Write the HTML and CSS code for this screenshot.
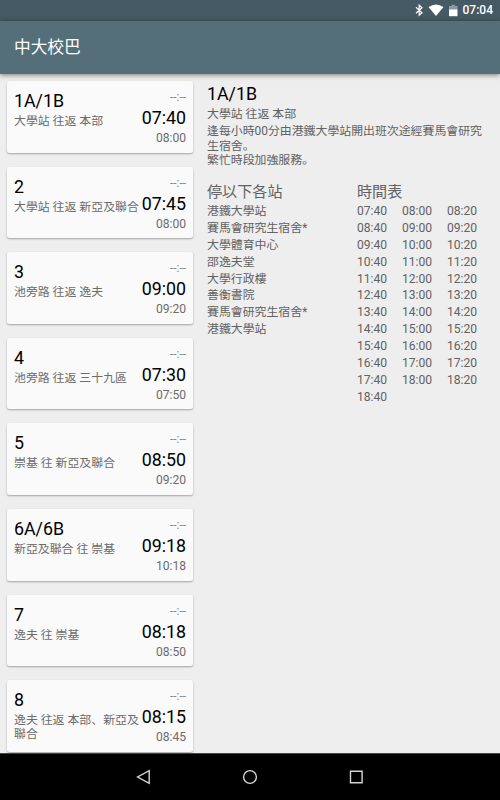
FILE: index.html
```
<!DOCTYPE html>
<html lang="ja">
<head>
<meta charset="utf-8">
<title>中大校巴</title>
<link rel="stylesheet" href="styles.css">
</head>
<body>
<div class="status">
<svg class="status-icons" width="46" height="16" viewBox="0 0 46 16">
<path d="M2 5.2 8 10.7 5.2 13.2V3.2L8 5.7 2 11.2" fill="none" stroke="#fff" stroke-width="1.2"/>
<path d="M14.5 5Q22-.2 29.5 5L22 14Z" fill="#fff"/>
<path d="M35 4h2.500V2.800h3.500V4h2.500v4h-8.500z" fill="#8d999f"/>
<path d="M35 7.500h8.500V14.200h-8.500z" fill="#fff"/>
</svg>
<span>07:04</span>
</div>
<header class="toolbar">中大校巴</header>
<main class="content">
<div class="routes">
<div class="card"><div class="info"><div class="name">1A/1B</div><div class="desc">大學站 往返 本部</div></div><div class="times"><div class="prev">--:--</div><div class="next">07:40</div><div class="later">08:00</div></div></div>
<div class="card"><div class="info"><div class="name">2</div><div class="desc">大學站 往返 新亞及聯合</div></div><div class="times"><div class="prev">--:--</div><div class="next">07:45</div><div class="later">08:00</div></div></div>
<div class="card"><div class="info"><div class="name">3</div><div class="desc">池旁路 往返 逸夫</div></div><div class="times"><div class="prev">--:--</div><div class="next">09:00</div><div class="later">09:20</div></div></div>
<div class="card"><div class="info"><div class="name">4</div><div class="desc">池旁路 往返 三十九區</div></div><div class="times"><div class="prev">--:--</div><div class="next">07:30</div><div class="later">07:50</div></div></div>
<div class="card"><div class="info"><div class="name">5</div><div class="desc">崇基 往 新亞及聯合</div></div><div class="times"><div class="prev">--:--</div><div class="next">08:50</div><div class="later">09:20</div></div></div>
<div class="card"><div class="info"><div class="name">6A/6B</div><div class="desc">新亞及聯合 往 崇基</div></div><div class="times"><div class="prev">--:--</div><div class="next">09:18</div><div class="later">10:18</div></div></div>
<div class="card"><div class="info"><div class="name">7</div><div class="desc">逸夫 往 崇基</div></div><div class="times"><div class="prev">--:--</div><div class="next">08:18</div><div class="later">08:50</div></div></div>
<div class="card"><div class="info"><div class="name">8</div><div class="desc">逸夫 往返 本部、新亞及聯合</div></div><div class="times"><div class="prev">--:--</div><div class="next">08:15</div><div class="later">08:45</div></div></div>
</div>
<section class="detail">
<div class="name">1A/1B</div>
<div class="route">大學站 往返 本部</div>
<div class="note">逢每小時00分由港鐵大學站開出班次途經賽馬會研究生宿舍。<br>繁忙時段加強服務。</div>
<div class="columns">
<div class="stops"><h2>停以下各站</h2>
<div>港鐵大學站</div><div>賽馬會研究生宿舍*</div><div>大學體育中心</div><div>邵逸夫堂</div><div>大學行政樓</div><div>善衡書院</div><div>賽馬會研究生宿舍*</div><div>港鐵大學站</div>
</div>
<div class="schedule"><h2>時間表</h2>
<div class="grid">
<span>07:40</span><span>08:00</span><span>08:20</span>
<span>08:40</span><span>09:00</span><span>09:20</span>
<span>09:40</span><span>10:00</span><span>10:20</span>
<span>10:40</span><span>11:00</span><span>11:20</span>
<span>11:40</span><span>12:00</span><span>12:20</span>
<span>12:40</span><span>13:00</span><span>13:20</span>
<span>13:40</span><span>14:00</span><span>14:20</span>
<span>14:40</span><span>15:00</span><span>15:20</span>
<span>15:40</span><span>16:00</span><span>16:20</span>
<span>16:40</span><span>17:00</span><span>17:20</span>
<span>17:40</span><span>18:00</span><span>18:20</span>
<span>18:40</span>
</div></div>
</div>
</section>
</main>
<nav class="navbar">
<svg width="16" height="16" viewBox="0 0 16 16"><path d="M13.2 1.600v12.800L1.600 8z"/></svg>
<svg width="16" height="16" viewBox="0 0 16 16"><circle cx="8" cy="8" r="6.400"/></svg>
<svg width="16" height="16" viewBox="0 0 16 16"><path d="M2.500 2.200h11.600v11.600H2.500z"/></svg>
</nav>
</body>
</html>
```
FILE: styles.css
```
* { box-sizing: border-box; }
body {
  margin: 0;
  width: 500px;
  height: 800px;
  overflow: hidden;
  display: flex;
  flex-direction: column;
  background: #eee;
  color: #6c6c6c;
  font: 11.9px/14.3px Roboto, "Noto Sans CJK JP", sans-serif;
}
.status {
  flex: none;
  height: 21px;
  padding-right: 7px;
  display: flex;
  justify-content: flex-end;
  align-items: center;
  gap: 3px;
  background: #455a64;
  color: #fff;
  font-size: 12px;
  font-weight: 500;
}
.status-icons { margin-bottom: 2px; }
.toolbar {
  flex: none;
  height: 53px;
  padding-left: 14px;
  line-height: 53px;
  background: #546e7a;
  color: #fff;
  font-size: 16.7px;
  box-shadow: 0 1px 5px rgba(0, 0, 0, .5);
  z-index: 1;
}
.content {
  flex: 1;
  min-height: 0;
  overflow: hidden;
  display: flex;
}
.routes {
  width: 200px;
  padding: 7px 7px 0;
  display: flex;
  flex-direction: column;
  gap: 14px;
}
.card {
  flex: none;
  height: 71.6px;
  padding: 0 7px;
  display: flex;
  background: #fafafa;
  border-radius: 2.5px;
  box-shadow: 0 1px 2px rgba(0, 0, 0, .32);
}
.info { flex: 1; padding-top: 9px; }
.name {
  color: #000;
  font-size: 17.8px;
  line-height: 22px;
}
.desc { margin-top: 2px; margin-right: -1px; }
.times {
  width: 45px;
  padding-top: 9px;
  text-align: right;
  white-space: nowrap;
}
.prev { line-height: 15px; color: #888; }
.next { color: #000; font-size: 17.8px; line-height: 25px; }
.later { font-size: 12.1px; line-height: 16px; }
.detail { width: 300px; padding: 9px 14px 0 7px; }
.route { margin-top: 2px; }
.note { margin-top: 3px; }
.columns { margin-top: 15px; display: flex; line-height: 16.86px; }
.stops, .schedule { width: 150px; flex: none; }
h2 {
  margin: 0 0 1px;
  font-size: 15.1px;
  font-weight: 400;
  line-height: 20px;
}
.columns, .note, .route { color: #626262; }
.grid {
  display: grid;
  grid-template-columns: repeat(3, 45px);
  font-size: 12.1px;
}
.navbar {
  flex: none;
  height: 47px;
  padding: 0 136px;
  display: flex;
  align-items: center;
  justify-content: space-between;
  background: #000;
  border-top: 1px solid #444;
}
.navbar svg { fill: none; stroke: #d4d4d4; stroke-width: 1.4; }
```
